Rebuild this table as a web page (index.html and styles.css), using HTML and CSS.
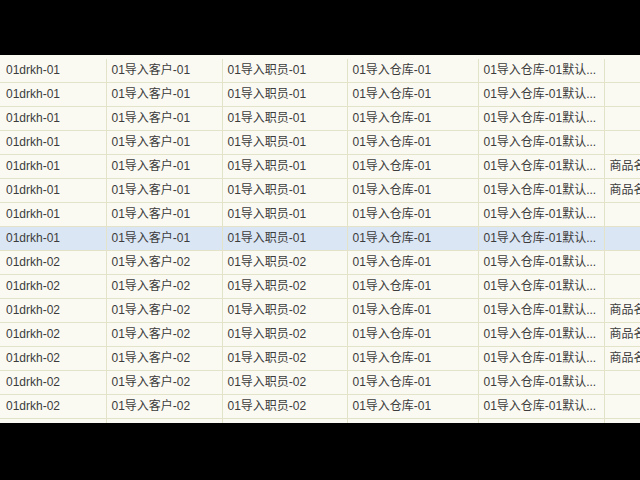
FILE: index.html
```html
<!DOCTYPE html>
<html>
<head>
<meta charset="utf-8">
<link rel="stylesheet" href="styles.css">
</head>
<body>
<div class="viewport">
<table class="grid">
<colgroup>
<col class="c1"><col class="c2"><col class="c3"><col class="c4"><col class="c5"><col class="c6">
</colgroup>
<tbody>
<tr><td>01drkh-01</td><td>01导入客户-01</td><td>01导入职员-01</td><td>01导入仓库-01</td><td>01导入仓库-01默认...</td><td></td></tr>
<tr><td>01drkh-01</td><td>01导入客户-01</td><td>01导入职员-01</td><td>01导入仓库-01</td><td>01导入仓库-01默认...</td><td></td></tr>
<tr><td>01drkh-01</td><td>01导入客户-01</td><td>01导入职员-01</td><td>01导入仓库-01</td><td>01导入仓库-01默认...</td><td></td></tr>
<tr><td>01drkh-01</td><td>01导入客户-01</td><td>01导入职员-01</td><td>01导入仓库-01</td><td>01导入仓库-01默认...</td><td></td></tr>
<tr><td>01drkh-01</td><td>01导入客户-01</td><td>01导入职员-01</td><td>01导入仓库-01</td><td>01导入仓库-01默认...</td><td>商品名称</td></tr>
<tr><td>01drkh-01</td><td>01导入客户-01</td><td>01导入职员-01</td><td>01导入仓库-01</td><td>01导入仓库-01默认...</td><td>商品名称</td></tr>
<tr><td>01drkh-01</td><td>01导入客户-01</td><td>01导入职员-01</td><td>01导入仓库-01</td><td>01导入仓库-01默认...</td><td></td></tr>
<tr class="selected"><td>01drkh-01</td><td>01导入客户-01</td><td>01导入职员-01</td><td>01导入仓库-01</td><td>01导入仓库-01默认...</td><td></td></tr>
<tr><td>01drkh-02</td><td>01导入客户-02</td><td>01导入职员-02</td><td>01导入仓库-01</td><td>01导入仓库-01默认...</td><td></td></tr>
<tr><td>01drkh-02</td><td>01导入客户-02</td><td>01导入职员-02</td><td>01导入仓库-01</td><td>01导入仓库-01默认...</td><td></td></tr>
<tr><td>01drkh-02</td><td>01导入客户-02</td><td>01导入职员-02</td><td>01导入仓库-01</td><td>01导入仓库-01默认...</td><td>商品名称</td></tr>
<tr><td>01drkh-02</td><td>01导入客户-02</td><td>01导入职员-02</td><td>01导入仓库-01</td><td>01导入仓库-01默认...</td><td>商品名称</td></tr>
<tr><td>01drkh-02</td><td>01导入客户-02</td><td>01导入职员-02</td><td>01导入仓库-01</td><td>01导入仓库-01默认...</td><td>商品名称</td></tr>
<tr><td>01drkh-02</td><td>01导入客户-02</td><td>01导入职员-02</td><td>01导入仓库-01</td><td>01导入仓库-01默认...</td><td></td></tr>
<tr><td>01drkh-02</td><td>01导入客户-02</td><td>01导入职员-02</td><td>01导入仓库-01</td><td>01导入仓库-01默认...</td><td></td></tr>
<tr><td></td><td></td><td></td><td></td><td></td><td></td></tr>
</tbody>
</table>
</div>
</body>
</html>
```
FILE: styles.css
```css
html, body {
  margin: 0;
  padding: 0;
  background: #000;
  width: 640px;
  height: 480px;
  overflow: hidden;
}
body {
  padding-top: 55px;
  box-sizing: border-box;
}
.viewport {
  height: 368px;
  overflow: hidden;
  background: #fafaf3;
  padding-top: 4px;
  box-sizing: border-box;
}
.grid {
  table-layout: fixed;
  border-collapse: collapse;
  width: 720px;
  font-family: "Liberation Sans", "Noto Sans CJK SC", sans-serif;
  font-size: 12px;
  color: #3c3c3c;
}
.c1 { width: 106px; }
.c2 { width: 116px; }
.c3 { width: 125px; }
.c4 { width: 131px; }
.c5 { width: 126px; }
.c6 { width: 116px; }
.grid td {
  height: 23px;
  padding: 0 0 0 5px;
  border: 1px solid #e3e3c9;
  border-top: none;
  white-space: nowrap;
  overflow: hidden;
  line-height: 23px;
}
.grid tr td:first-child {
  border-left: none;
  padding-left: 6px;
}
.grid tr.selected td {
  background: #dbe6f4;
}
```
